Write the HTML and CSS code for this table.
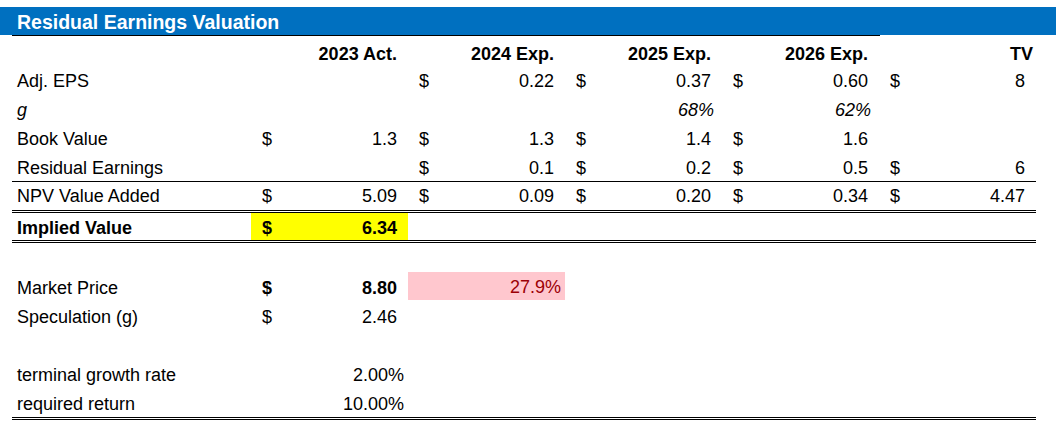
FILE: index.html
```html
<!DOCTYPE html>
<html>
<head>
<meta charset="utf-8">
<link rel="stylesheet" href="styles.css">
</head>
<body>
<div class="sheet">
  <div class="title">Residual Earnings Valuation</div>
  <div class="title-rule"></div>

  <div class="row head">
    <div class="cell label"></div>
    <div class="cell hd">2023 Act.</div>
    <div class="cell hd">2024 Exp.</div>
    <div class="cell hd">2025 Exp.</div>
    <div class="cell hd">2026 Exp.</div>
    <div class="cell hd tv">TV</div>
  </div>

  <div class="row">
    <div class="cell label">Adj. EPS</div>
    <div class="cell"></div>
    <div class="cell acct"><span>$</span><span>0.22</span></div>
    <div class="cell acct"><span>$</span><span>0.37</span></div>
    <div class="cell acct"><span>$</span><span>0.60</span></div>
    <div class="cell acct"><span>$</span><span>8</span></div>
  </div>

  <div class="row">
    <div class="cell label it">g</div>
    <div class="cell"></div>
    <div class="cell"></div>
    <div class="cell pct it g">68%</div>
    <div class="cell pct it g">62%</div>
    <div class="cell"></div>
  </div>

  <div class="row">
    <div class="cell label">Book Value</div>
    <div class="cell acct"><span>$</span><span>1.3</span></div>
    <div class="cell acct"><span>$</span><span>1.3</span></div>
    <div class="cell acct"><span>$</span><span>1.4</span></div>
    <div class="cell acct"><span>$</span><span>1.6</span></div>
    <div class="cell"></div>
  </div>

  <div class="row">
    <div class="cell label">Residual Earnings</div>
    <div class="cell"></div>
    <div class="cell acct"><span>$</span><span>0.1</span></div>
    <div class="cell acct"><span>$</span><span>0.2</span></div>
    <div class="cell acct"><span>$</span><span>0.5</span></div>
    <div class="cell acct"><span>$</span><span>6</span></div>
  </div>

  <div class="row npv">
    <div class="cell label">NPV Value Added</div>
    <div class="cell acct"><span>$</span><span>5.09</span></div>
    <div class="cell acct"><span>$</span><span>0.09</span></div>
    <div class="cell acct"><span>$</span><span>0.20</span></div>
    <div class="cell acct"><span>$</span><span>0.34</span></div>
    <div class="cell acct"><span>$</span><span>4.47</span></div>
  </div>

  <div class="row implied bold">
    <div class="cell label">Implied Value</div>
    <div class="cell acct yellow"><span>$</span><span>6.34</span></div>
    <div class="cell"></div>
    <div class="cell"></div>
    <div class="cell"></div>
    <div class="cell"></div>
  </div>

  <div class="row"></div>

  <div class="row">
    <div class="cell label">Market Price</div>
    <div class="cell acct bold"><span>$</span><span>8.80</span></div>
    <div class="cell pct bad">27.9%</div>
  </div>

  <div class="row">
    <div class="cell label">Speculation (g)</div>
    <div class="cell acct"><span>$</span><span>2.46</span></div>
  </div>

  <div class="row"></div>

  <div class="row">
    <div class="cell label">terminal growth rate</div>
    <div class="cell pct">2.00%</div>
  </div>

  <div class="row last">
    <div class="cell label">required return</div>
    <div class="cell pct">10.00%</div>
  </div>
</div>
</body>
</html>
```

FILE: styles.css
```css
html, body {
  margin: 0;
  padding: 0;
  background: #ffffff;
}

.sheet {
  font-family: "Liberation Sans", Arial, sans-serif;
  font-size: 18px;
  color: #000000;
  padding-top: 7px;
}

.title {
  height: 28px;
  background: #0070c0;
  color: #ffffff;
  font-weight: bold;
  font-size: 19.5px;
  line-height: 28px;
  padding-left: 17px;
  box-sizing: border-box;
  padding-top: 1px;
}

.title-rule {
  margin-left: 12px;
  width: 868px;
  height: 1px;
  background: #000000;
}

.row {
  display: grid;
  grid-template-columns: 239px repeat(5, 157px);
  height: 29px;
  margin-left: 12px;
  width: 1024px;
  box-sizing: border-box;
}

.cell {
  display: flex;
  align-items: flex-end;
  line-height: 22px;
  padding-bottom: 2px;
  box-sizing: border-box;
  white-space: nowrap;
}

.label {
  padding-left: 5px;
}

.hd {
  justify-content: flex-end;
  font-weight: bold;
  padding-right: 11px;
  padding-bottom: 0;
}

.hd.tv {
  padding-right: 3px;
}

.acct {
  justify-content: space-between;
  padding-left: 11px;
  padding-right: 11px;
}

.pct {
  justify-content: flex-end;
  padding-right: 4px;
}

.pct.g {
  padding-right: 8px;
}

.it {
  font-style: italic;
}

.bold {
  font-weight: bold;
}

.npv {
  height: 32px;
  border-top: 1px solid #000000;
  border-bottom: 3px double #000000;
}

.npv .cell {
  padding-bottom: 3px;
}

.implied {
  height: 30px;
  border-bottom: 3px double #000000;
}

.implied .cell {
  padding-bottom: 1px;
}

.yellow {
  background: #ffff00;
}

.bad {
  background: #ffc7ce;
  color: #9c0006;
}

.row .bad {
  height: 28px;
}

.last {
  height: 32px;
  border-bottom: 3px double #000000;
}

.last .cell {
  padding-bottom: 2px;
}
```
